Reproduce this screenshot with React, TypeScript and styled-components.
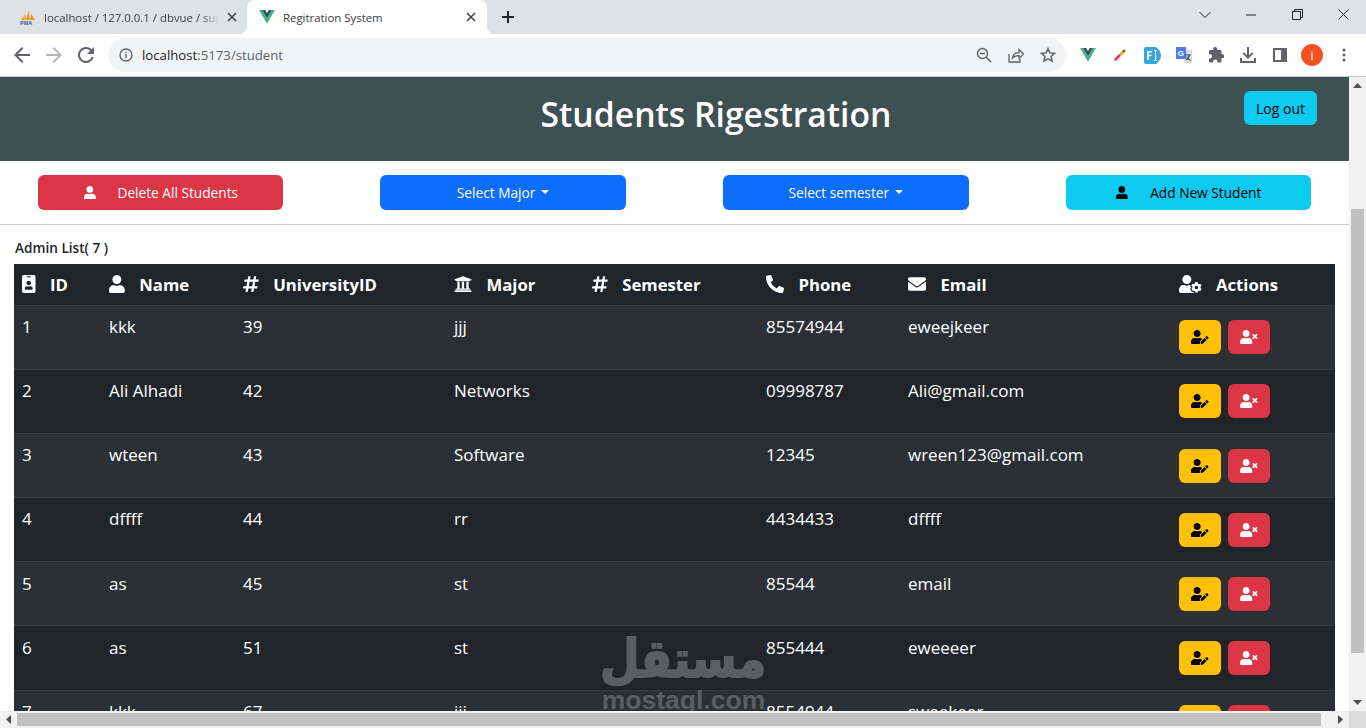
import React from 'react';
import styled, { createGlobalStyle } from 'styled-components';
import { FaIdBadge, FaUser, FaHashtag, FaUniversity, FaPhoneAlt, FaEnvelope, FaUserCog, FaUserEdit, FaUserTimes } from 'react-icons/fa';

const Global = createGlobalStyle`
  html, body { margin: 0; padding: 0; height: 100%; overflow: hidden; background: #fff; }
  * { box-sizing: border-box; }
`;

const FONT = `"Open Sans", "Noto Sans", "Liberation Sans", sans-serif`;
const COLUMNS = '87px 134px 211px 138px 174px 142px 271px 164px';

const Screen = styled.div`
  width: 1366px; height: 728px; display: flex; flex-direction: column; overflow: hidden; font-family: ${FONT};
`;
const TabStrip = styled.div`
  height: 34px; flex: none; background: #dee1e6; display: flex; align-items: stretch; padding-left: 7px;
`;
const InactiveTab = styled.div`
  width: 240px; display: flex; align-items: center; padding: 0 10px 0 13px; gap: 8px; font-size: 11.4px; color: #3c4043;
`;
const ActiveTab = styled.div`
  width: 240px; background: #fff; border-radius: 8px 8px 0 0; display: flex; align-items: center; padding: 0 11px 0 12px; gap: 8px;
  font-size: 11.4px; color: #3c4043; position: relative;
  &::before, &::after { content: ''; position: absolute; bottom: 0; width: 8px; height: 8px; }
  &::before { left: -8px; background: radial-gradient(circle at 0 0, transparent 8px, #fff 8.5px); }
  &::after { right: -8px; background: radial-gradient(circle at 100% 0, transparent 8px, #fff 8.5px); }
`;
const TabTitle = styled.span`
  flex: 1; white-space: nowrap; overflow: hidden;
`;
const FadedTitle = styled(TabTitle)`
  -webkit-mask-image: linear-gradient(90deg, #000 90%, transparent);
  mask-image: linear-gradient(90deg, #000 90%, transparent);
`;
const TabClose = styled.svg`
  width: 10px; height: 10px; flex: none; stroke: #3c4043; stroke-width: 1.5; fill: none;
`;
const NewTab = styled.svg`
  width: 14px; height: 14px; margin: 10px 0 0 14px; stroke: #202124; stroke-width: 2; fill: none;
`;
const WindowControls = styled.div`
  margin-left: auto; display: flex; align-items: flex-start;
`;
const WindowButton = styled.div`
  width: 46px; height: 29px; display: flex; align-items: center; justify-content: center;
`;
const Toolbar = styled.div`
  height: 43px; flex: none; background: #fff; border-bottom: 1px solid #c9cbce; display: flex; align-items: flex-start; padding: 4px 0 0 6px;
`;
const NavButton = styled.div`
  width: 32px; height: 34px; display: flex; align-items: center; justify-content: center;
`;
const Omnibox = styled.div`
  width: 958px; height: 34px; margin-left: 6px; border-radius: 17px; background: #f1f3f4; display: flex; align-items: center; padding: 0 2px 0 11px;
`;
const Url = styled.div`
  margin-left: 9px; font-size: 13.2px; color: #5f6368; flex: 1; white-space: nowrap;
  b { font-weight: 400; color: #202124; }
`;
const OmniIcon = styled.div`
  width: 32px; height: 34px; display: flex; align-items: center; justify-content: center;
`;
const Extensions = styled.div`
  display: flex; margin-left: 6px;
`;
const ExtIcon = styled.div`
  width: 32px; height: 34px; display: flex; align-items: center; justify-content: center;
`;
const Avatar = styled.div`
  width: 22px; height: 22px; border-radius: 50%; background: #f4511e; color: #fff; font-size: 12px; display: flex; align-items: center; justify-content: center;
`;
const Viewport = styled.div`
  flex: 1; min-height: 0; display: flex;
`;
const Page = styled.div`
  width: 1349px; height: 634px; overflow: hidden; position: relative; background: #fff; font-family: ${FONT};
`;
const VScroll = styled.div`
  width: 17px; background: #f1f1f1; display: flex; flex-direction: column; align-items: center; height: 634px;
`;
const VThumb = styled.div`
  width: 13px; height: 444px; margin-top: 115px; background: #c1c1c1;
`;
const ArrowSlot = styled.div`
  height: 17px; width: 17px; flex: none; display: flex; align-items: center; justify-content: center;
`;
const VTrack = styled.div`
  flex: 1; display: flex; justify-content: center; min-height: 0;
`;
const HScroll = styled.div`
  height: 17px; flex: none; display: flex; background: #f1f1f1;
`;
const HTrack = styled.div`
  width: 1315px; display: flex; align-items: center;
`;
const HThumb = styled.div`
  width: 1304px; height: 13px; background: #c1c1c1;
`;
const Corner = styled.div`
  width: 17px; background: #dcdcdc; margin-left: auto;
`;
const Header = styled.header`
  height: 84px; background: #3d5052; display: flex; align-items: flex-start; padding: 14px 32px 0 188px;
`;
const Title = styled.h1`
  flex: 1; margin: 0; text-align: center; color: #fff; font-size: 33.7px; font-weight: 600; line-height: 47px; white-space: nowrap;
`;
const Btn = styled.button`
  font-family: ${FONT}; border: 0; border-radius: 6px; font-size: 13.7px; display: flex; align-items: center; justify-content: center;
  background: ${p => p.$bg}; color: ${p => p.$fg ?? '#fff'}; padding: 0; white-space: nowrap;
`;
const LogoutBtn = styled(Btn)`
  width: 73px; height: 34px; flex: none; font-size: 14px;
`;
const ActionBar = styled.div`
  display: flex; justify-content: space-between; padding: 14px 37.8px 14px 37.7px; border-bottom: 1px solid #ccc; height: 64px;
`;
const BarBtn = styled(Btn)`
  width: 245.5px; height: 35px; gap: 21px;
`;
const Caret = styled.span`
  display: inline-block; margin: 0 0 2px -15px; border-top: 4.8px solid; border-left: 4.8px solid transparent; border-right: 4.8px solid transparent;
`;
const ListTitle = styled.div`
  font-size: 13.6px; font-weight: 600; color: #212529; padding: 14px 0 0 15px; line-height: 18px; height: 39px;
`;
const Table = styled.div`
  width: 1321px; margin-left: 14px; color: #fff; background: #212529;
`;
const HeadRow = styled.div`
  display: grid; grid-template-columns: ${COLUMNS}; height: 41.6px; border-bottom: 1px solid #373b3e;
`;
const HeadCell = styled.div`
  padding: 0 8px; font-size: 16.7px; font-weight: 700; white-space: nowrap; display: flex; align-items: center; gap: 14.5px;
`;
const IdIcon = styled(FaIdBadge)`width: 13.5px; height: 18px; flex: none;`;
const NameIcon = styled(FaUser)`width: 15.75px; height: 18px; flex: none;`;
const HashIcon = styled(FaHashtag)`width: 15.75px; height: 18px; flex: none;`;
const MajorIcon = styled(FaUniversity)`width: 18px; height: 18px; flex: none;`;
const PhoneIcon = styled(FaPhoneAlt)`width: 18px; height: 18px; flex: none;`;
const MailIcon = styled(FaEnvelope)`width: 18px; height: 18px; flex: none;`;
const CogIcon = styled(FaUserCog)`width: 22.5px; height: 18px; flex: none;`;
const EditIcon = styled(FaUserEdit)`width: 17.5px; height: 14px;`;
const RemoveIcon = styled(FaUserTimes)`width: 17.5px; height: 14px;`;
const Row = styled.div`
  display: grid; grid-template-columns: ${COLUMNS}; height: 64.17px; border-bottom: 1px solid #373b3e;
  background: ${p => p.$odd ? '#2c3034' : '#212529'};
`;
const Cell = styled.div`
  padding: 7.3px 8px 0; font-size: 17px; line-height: 28px; white-space: nowrap;
`;
const ActionCell = styled.div`
  padding: 14.7px 8px 0; display: flex; gap: 7px; align-items: flex-start;
`;
const IconBtn = styled(Btn)`
  width: 42px; height: 34px;
`;
const Watermark = styled.div`
  position: absolute; left: 600px; top: 553px; width: 167px; color: #5a5e62; pointer-events: none;
  display: flex; flex-direction: column; align-items: center;
`;
const WatermarkAr = styled.div`
  font-family: "DejaVu Sans", sans-serif; font-weight: 700; font-size: 52px; line-height: 58px; white-space: nowrap;
  transform: scaleX(.875); transform-origin: center; -webkit-text-stroke: 2px #5a5e62;
`;
const WatermarkEn = styled.div`
  font-family: "Liberation Sans", sans-serif; font-weight: 700; font-size: 26.5px; line-height: 24px; white-space: nowrap;
`;

const VueLogo = ({ s = 16 }: { s?: number }) => (
  <svg width={s} height={s * 0.87} viewBox="0 0 256 221">
    <path fill="#41b883" d="M0 0l128 220.8L256 0h-51.2L128 132.5 50.560 0z" />
    <path fill="#35495e" d="M50.560 0L128 133.120 204.800 0h-47.360L128 51.2 97.920 0z" />
  </svg>
);
const PmaLogo = () => (
  <svg width="16" height="16" viewBox="0 0 16 16">
    <path fill="#f29111" d="M1 11 5 6l.5 5zM6 11l2.500-9 1 9zM10 11l1-6 4 6z" />
    <path fill="#e8b23a" d="M5 4 6 11H3z" />
    <text x="0" y="15.500" fontSize="5.500" fontWeight="700" fontFamily="Liberation Sans" fill="#3b5f93">PMA</text>
  </svg>
);
const CloseX = () => (
  <TabClose viewBox="0 0 10 10"><path d="M1 1l8 8M9 1l-8 8" /></TabClose>
);
const Tri = ({ d }: { d: string }) => (
  <svg width="9" height="9" viewBox="0 0 9 9"><path fill="#505050" d={d} /></svg>
);

const heads: [React.ReactNode, string][] = [
  [<IdIcon key="a" />, 'ID'],
  [<NameIcon key="a" />, 'Name'],
  [<HashIcon key="a" />, 'UniversityID'],
  [<MajorIcon key="a" />, 'Major'],
  [<HashIcon key="a" />, 'Semester'],
  [<PhoneIcon key="a" />, 'Phone'],
  [<MailIcon key="a" />, 'Email'],
  [<CogIcon key="a" />, 'Actions'],
];
const rows = [
  ['1', 'kkk', '39', 'jjj', '85574944', 'eweejkeer'],
  ['2', 'Ali Alhadi', '42', 'Networks', '09998787', 'Ali@gmail.com'],
  ['3', 'wteen', '43', 'Software', '12345', 'wreen123@gmail.com'],
  ['4', 'dffff', '44', 'rr', '4434433', 'dffff'],
  ['5', 'as', '45', 'st', '85544', 'email'],
  ['6', 'as', '51', 'st', '855444', 'eweeeer'],
  ['7', 'kkk', '67', 'jjj', '8554944', 'sweekeer'],
];

export default function App() {
  return (
    <Screen>
      <Global />
      <TabStrip>
        <InactiveTab>
          <PmaLogo />
          <FadedTitle>localhost / 127.0.0.1 / dbvue / superuser</FadedTitle>
          <CloseX />
        </InactiveTab>
        <ActiveTab>
          <VueLogo />
          <TabTitle>Regitration System</TabTitle>
          <CloseX />
        </ActiveTab>
        <NewTab viewBox="0 0 14 14"><path d="M7 1v12M1 7h12" /></NewTab>
        <WindowControls>
          <WindowButton>
            <svg width="14" height="8" viewBox="0 0 14 8" fill="none" stroke="#202124"><path d="M1.500 1 7 6.500 12.500 1" /></svg>
          </WindowButton>
          <WindowButton>
            <svg width="10" height="2" viewBox="0 0 10 2"><path stroke="#202124" d="M0 1h10" /></svg>
          </WindowButton>
          <WindowButton>
            <svg width="11" height="11" viewBox="0 0 11 11" fill="none" stroke="#202124"><path d="M.5 2.500h8v8h-8zM2.500 2.500v-2h8v8h-2" /></svg>
          </WindowButton>
          <WindowButton>
            <svg width="11" height="11" viewBox="0 0 11 11" fill="none" stroke="#202124"><path d="M.5.5l10 10M10.500.5l-10 10" /></svg>
          </WindowButton>
        </WindowControls>
      </TabStrip>
      <Toolbar>
        <NavButton>
          <svg width="16" height="16" viewBox="0 0 16 16" fill="#5f6368"><path d="M16 7H3.800l5.600-5.600L8 0 0 8l8 8 1.400-1.400L3.800 9H16z" /></svg>
        </NavButton>
        <NavButton>
          <svg width="16" height="16" viewBox="0 0 16 16" fill="#b4b7ba"><path d="M0 7h12.200L6.600 1.400 8 0l8 8-8 8-1.400-1.400L12.200 9H0z" /></svg>
        </NavButton>
        <NavButton>
          <svg width="16" height="16" viewBox="0 0 16 16" fill="#5f6368"><path d="M13.650 2.350A8 8 0 1 0 15.750 10h-2.100a6 6 0 1 1-1.420-6.230L9 7h7V0z" /></svg>
        </NavButton>
        <Omnibox>
          <svg width="14" height="14" viewBox="0 0 14 14" fill="none" stroke="#5f6368" strokeWidth="1.300"><circle cx="7" cy="7" r="6" /><path d="M7 6v4.200M7 3.700v1.300" /></svg>
          <Url><b>localhost</b>:5173/student</Url>
          <OmniIcon>
            <svg width="16" height="16" viewBox="0 0 16 16" fill="none" stroke="#5f6368" strokeWidth="1.500"><circle cx="6.500" cy="6.500" r="5" /><path d="M10.200 10.200 15 15M4 6.500h5" /></svg>
          </OmniIcon>
          <OmniIcon>
            <svg width="16" height="16" viewBox="0 0 16 16" fill="none" stroke="#5f6368" strokeWidth="1.300"><path d="M1 7v8h11v-3M4.500 11c.5-3.500 3-5.500 6.500-5.500V2.500L15.500 7 11 11.500V8.500C8 8.500 6 9.300 4.500 11z" /></svg>
          </OmniIcon>
          <OmniIcon>
            <svg width="16" height="16" viewBox="0 0 16 16" fill="none" stroke="#5f6368" strokeWidth="1.500"><path d="M8 1.700l1.900 4.200 4.600.5-3.400 3.100.9 4.600L8 11.800l-4 2.300.9-4.600L1.500 6.400l4.600-.5z" /></svg>
          </OmniIcon>
        </Omnibox>
        <Extensions>
          <ExtIcon><VueLogo s={16} /></ExtIcon>
          <ExtIcon>
            <svg width="14" height="14" viewBox="0 0 14 14"><path stroke="#e0395a" strokeWidth="2.500" strokeLinecap="round" d="M2.500 11.500l4-4" /><path stroke="#f5a623" strokeWidth="3" strokeLinecap="round" d="M8 6l3-3" /><circle cx="11" cy="3" r="1.300" fill="#7a5a20" /></svg>
          </ExtIcon>
          <ExtIcon>
            <svg width="17" height="17" viewBox="0 0 17 17"><path fill="#35a7e0" d="M2 0h10c2.500 1.500 5 5 5 8.500S14.500 15.500 12 17H2a2 2 0 0 1-2-2V2a2 2 0 0 1 2-2z" /><path fill="#fff" d="M3 4h5v1.500H4.800v2.200H7.500v1.500H4.800V13H3zM10 3h3v1h-1v9h1v1h-3v-1h1V4h-1z" /></svg>
          </ExtIcon>
          <ExtIcon>
            <svg width="16" height="16" viewBox="0 0 16 16"><path fill="#dcdcdc" d="M6 3h10v13H8z" /><path fill="#4a7df0" d="M0 0h10v12H0z" /><text x="1.800" y="8.500" fontSize="8" fontWeight="700" fontFamily="Liberation Sans" fill="#fff">G</text><path stroke="#555" strokeWidth="1.100" d="M9 8h6M12 7v1M10 13c2-1 3-3 3.500-5M10.500 9.500c1 2 2 3 4 4" /></svg>
          </ExtIcon>
          <ExtIcon>
            <svg width="16" height="16" viewBox="0 0 16 16" fill="#5f6368"><path d="M14.500 7.300h-1V4.500c0-.8-.7-1.500-1.500-1.500H9.200V2a2 2 0 0 0-4 0v1H2.500C1.700 3 1 3.700 1 4.500v2.700h1A2.100 2.100 0 0 1 2 11.400H1v2.700c0 .8.700 1.500 1.500 1.500h2.700v-1a2.100 2.100 0 0 1 4.200 0v1H12c.8 0 1.500-.7 1.500-1.500V11h1a1.850 1.850 0 0 0 0-3.700z" /></svg>
          </ExtIcon>
          <ExtIcon>
            <svg width="16" height="16" viewBox="0 0 16 16" fill="#5f6368"><path d="M7 0h2v8.200l3-3 1.400 1.400L8 12 2.600 6.600 4 5.200l3 3zM0 11h2v3h12v-3h2v5H0z" /></svg>
          </ExtIcon>
          <ExtIcon>
            <svg width="14" height="14" viewBox="0 0 14 14" fill="#5f6368"><path d="M0 0h14v14H0zM2 2v10h6V2z" /></svg>
          </ExtIcon>
          <ExtIcon><Avatar>i</Avatar></ExtIcon>
          <ExtIcon>
            <svg width="4" height="14" viewBox="0 0 4 14" fill="#5f6368"><circle cx="2" cy="2" r="1.500" /><circle cx="2" cy="7" r="1.500" /><circle cx="2" cy="12" r="1.500" /></svg>
          </ExtIcon>
        </Extensions>
      </Toolbar>
      <Viewport>
        <Page>
          <Header>
            <Title>Students Rigestration</Title>
            <LogoutBtn $bg="#0dcaf0" $fg="#000">Log out</LogoutBtn>
          </Header>
          <ActionBar>
            <BarBtn $bg="#dc3545"><FaUser />Delete All Students</BarBtn>
            <BarBtn $bg="#0d6efd">Select Major<Caret /></BarBtn>
            <BarBtn $bg="#0d6efd">Select semester<Caret /></BarBtn>
            <BarBtn $bg="#0dcaf0" $fg="#000"><FaUser />Add New Student</BarBtn>
          </ActionBar>
          <ListTitle>Admin List( 7 )</ListTitle>
          <Table>
            <HeadRow>
              {heads.map(([icon, label]) => (
                <HeadCell key={label}>{icon}{label}</HeadCell>
              ))}
            </HeadRow>
            {rows.map((r, i) => (
              <Row key={r[0]} $odd={i % 2 === 0}>
                <Cell>{r[0]}</Cell>
                <Cell>{r[1]}</Cell>
                <Cell>{r[2]}</Cell>
                <Cell>{r[3]}</Cell>
                <Cell />
                <Cell>{r[4]}</Cell>
                <Cell>{r[5]}</Cell>
                <ActionCell>
                  <IconBtn $bg="#ffc107" $fg="#000"><EditIcon /></IconBtn>
                  <IconBtn $bg="#dc3545"><RemoveIcon /></IconBtn>
                </ActionCell>
              </Row>
            ))}
          </Table>
          <Watermark>
            <WatermarkAr>مستقل</WatermarkAr>
            <WatermarkEn>mostaql.com</WatermarkEn>
          </Watermark>
        </Page>
        <VScroll>
          <ArrowSlot><Tri d="M4.500 2 9 7H0z" /></ArrowSlot>
          <VTrack><VThumb /></VTrack>
          <ArrowSlot><Tri d="M0 2h9L4.500 7z" /></ArrowSlot>
        </VScroll>
      </Viewport>
      <HScroll>
        <ArrowSlot><Tri d="M7 0v9L2 4.500z" /></ArrowSlot>
        <HTrack><HThumb /></HTrack>
        <ArrowSlot><Tri d="M2 0v9l5-4.500z" /></ArrowSlot>
        <Corner />
      </HScroll>
    </Screen>
  );
}
